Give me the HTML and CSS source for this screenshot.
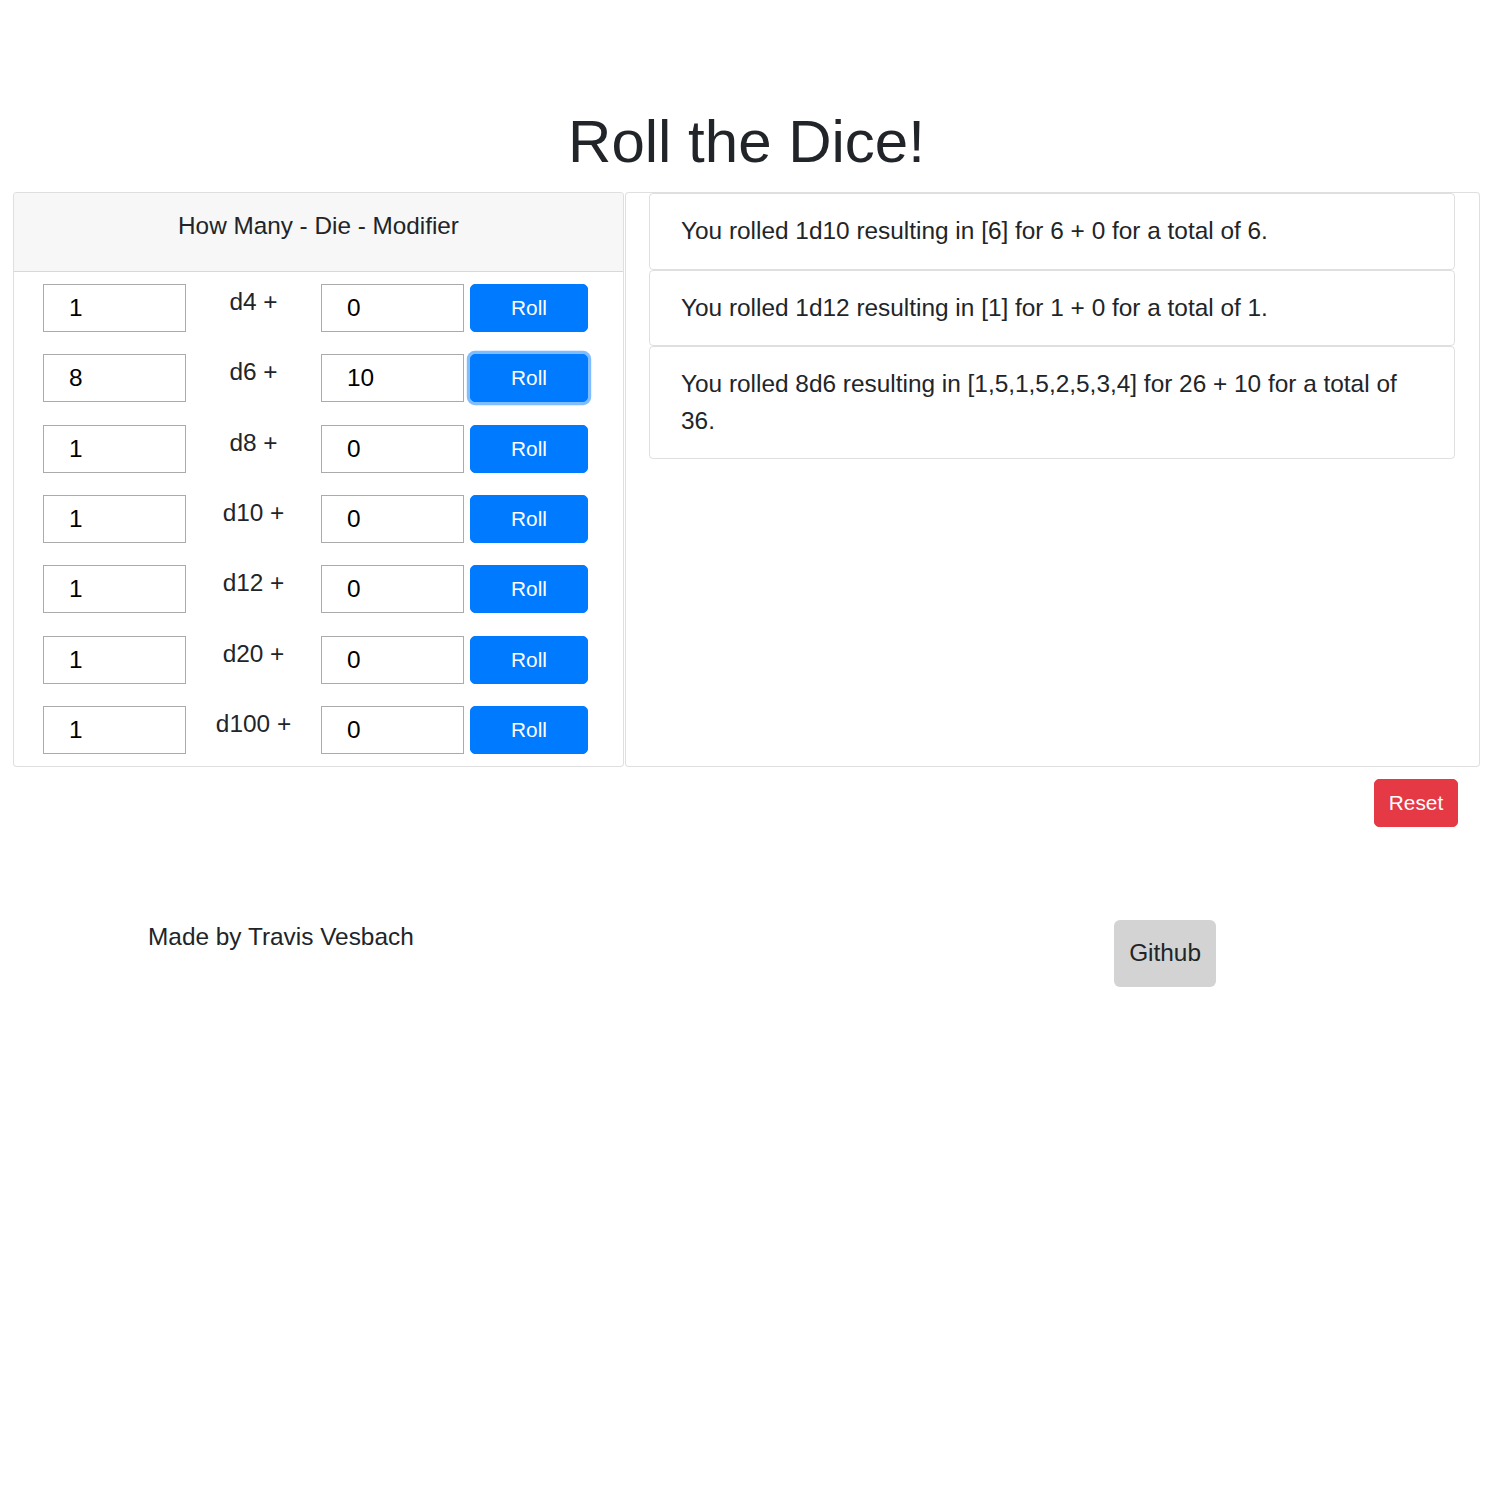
FILE: index.html
```html
<!DOCTYPE html>
<html lang="en">
<head>
<meta charset="utf-8">
<title>Roll the Dice!</title>
<link rel="stylesheet" href="styles.css">
</head>
<body>
<main class="page">
  <h1 class="title">Roll the Dice!</h1>
  <div class="layout">
    <section class="card dice-card">
      <div class="card-header"><h4 class="header-text">How Many - Die - Modifier</h4></div>
      <div class="dice-rows">
        <div class="dice-row"><input class="num" type="text" value="1"><span class="die">d4 +</span><input class="num" type="text" value="0"><button class="btn btn-roll">Roll</button></div>
        <div class="dice-row"><input class="num" type="text" value="8"><span class="die">d6 +</span><input class="num" type="text" value="10"><button class="btn btn-roll focused">Roll</button></div>
        <div class="dice-row"><input class="num" type="text" value="1"><span class="die">d8 +</span><input class="num" type="text" value="0"><button class="btn btn-roll">Roll</button></div>
        <div class="dice-row"><input class="num" type="text" value="1"><span class="die">d10 +</span><input class="num" type="text" value="0"><button class="btn btn-roll">Roll</button></div>
        <div class="dice-row"><input class="num" type="text" value="1"><span class="die">d12 +</span><input class="num" type="text" value="0"><button class="btn btn-roll">Roll</button></div>
        <div class="dice-row"><input class="num" type="text" value="1"><span class="die">d20 +</span><input class="num" type="text" value="0"><button class="btn btn-roll">Roll</button></div>
        <div class="dice-row"><input class="num" type="text" value="1"><span class="die">d100 +</span><input class="num" type="text" value="0"><button class="btn btn-roll">Roll</button></div>
      </div>
    </section>
    <section class="card results-card">
      <ul class="results">
        <li class="result">You rolled 1d10 resulting in [6] for 6 + 0 for a total of 6.</li>
        <li class="result">You rolled 1d12 resulting in [1] for 1 + 0 for a total of 1.</li>
        <li class="result">You rolled 8d6 resulting in [1,5,1,5,2,5,3,4] for 26 + 10 for a total of 36.</li>
      </ul>
    </section>
  </div>
  <div class="reset-row"><button class="btn btn-reset">Reset</button></div>
</main>
<footer class="footer">
  <p class="credit">Made by Travis Vesbach</p>
  <button class="btn btn-github">Github</button>
</footer>
</body>
</html>
```
FILE: styles.css
```css
* { box-sizing: border-box; }

body {
  margin: 0;
  padding-top: 106px;
  font-family: "Liberation Sans", Arial, sans-serif;
  color: #212529;
  background: #fff;
}

.page {
  margin-left: 13px;
  width: 1467px;
}

.title {
  margin: 0 0 14px;
  font-size: 60px;
  font-weight: 400;
  line-height: 72px;
  text-align: center;
}

.layout {
  display: grid;
  grid-template-columns: 611px 855px;
  column-gap: 1px;
}

.card {
  border: 1px solid rgba(0, 0, 0, 0.125);
  border-radius: 4px;
  background: #fff;
}

.card-header {
  background: #f7f7f7;
  border-bottom: 1px solid rgba(0, 0, 0, 0.125);
  border-radius: 3px 3px 0 0;
  padding: 15px 20px 26.4px;
  text-align: center;
}

.header-text {
  margin: 0;
  font-size: 24.3px;
  font-weight: 400;
  line-height: 36.6px;
}

.dice-rows {
  display: flex;
  flex-direction: column;
  gap: 22.33px;
  padding: 12px 0 12px 29px;
}

.dice-row {
  display: flex;
  align-items: flex-start;
  height: 48px;
}

.num {
  width: 143px;
  height: 48px;
  margin: 0;
  padding: 0 0 0 25px;
  border: 1px solid #ababab;
  border-radius: 0;
  font-family: "Liberation Sans", Arial, sans-serif;
  font-size: 24.4px;
  color: #000;
  background: #fff;
}

.die {
  width: 135px;
  font-size: 24.4px;
  line-height: 36.6px;
  text-align: center;
}

.btn {
  font-family: "Liberation Sans", Arial, sans-serif;
  border: 1px solid transparent;
  cursor: pointer;
}

.btn-roll {
  margin-left: 6px;
  width: 118px;
  height: 48px;
  background: #007bff;
  border-color: #007bff;
  color: #fff;
  font-size: 20.8px;
  border-radius: 5px;
}

.btn-roll.focused {
  box-shadow: 0 0 0 3.2px rgba(0, 123, 255, 0.5);
}

.results {
  list-style: none;
  margin: 0;
  padding: 0 24px 0 23px;
}

.result {
  border: 1px solid rgba(0, 0, 0, 0.125);
  border-radius: 4px;
  padding: 19px 31px;
  font-size: 24.4px;
  line-height: 36.6px;
}

.reset-row {
  display: flex;
  justify-content: flex-end;
  padding-right: 22px;
  margin-top: 12px;
}

.btn-reset {
  width: 84px;
  height: 48px;
  background: #e53946;
  border-color: #e53946;
  color: #fff;
  font-size: 20.8px;
  border-radius: 5px;
}

.footer {
  display: flex;
  align-items: flex-start;
  margin-top: 92px;
  padding-left: 148px;
}

.credit {
  margin: 0;
  font-size: 24.4px;
  line-height: 36.6px;
}

.btn-github {
  margin: 1px 284px 0 auto;
  height: 67px;
  padding: 0 15px;
  background: #d3d3d3;
  border: none;
  border-radius: 6px;
  color: #212529;
  font-size: 24.4px;
}
```
